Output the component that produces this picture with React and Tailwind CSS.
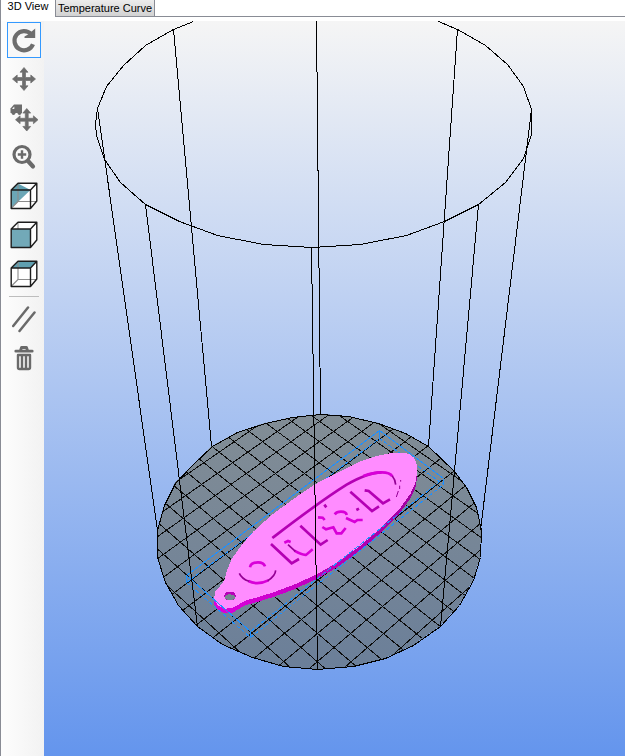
const iconStroke = { fill: "none", stroke: "#6a6a6a", strokeLinecap: "round", strokeLinejoin: "round" };

function Arrows() {
  return (
    <path
      d="M12 0.5 L16 5.2 H13.5 V10.5 H18.8 V8 L23.5 12 L18.8 16 V13.5 H13.5 V18.8 H16 L12 23.5 L8 18.8 H10.5 V13.5 H5.2 V16 L0.5 12 L5.2 8 V10.5 H10.5 V5.2 H8 Z"
      fill="#6d6d6d"
      stroke="#6d6d6d"
      strokeWidth=".7"
      strokeLinejoin="round"
    />
  );
}

function Cube({ children, front }) {
  return (
    <svg width="28" height="28" viewBox="0 0 28 28">
      <path d="M1.5 8 L8 1.5 H26.5 V19 L21 26.5 H1.5 Z" fill="#fff" />
      {children}
      {!front && <path d="M8 1.5 V19.5 H26 M8 19.5 L1.5 26" fill="none" stroke="#8d8d8d" strokeWidth="1.1" />}
      <path
        d="M1.2 8 H20.5 V26.5 H1.2 Z M1.2 8 L8 1.2 H26.8 L20.5 8 M26.8 1.2 V19 L20.5 26.5"
        fill="none"
        stroke="#1c1c1c"
        strokeWidth="1.4"
        strokeLinejoin="round"
      />
    </svg>
  );
}

const tools = [
  {
    name: "Rotate",
    icon: (
      <svg width="28" height="28" viewBox="0 0 28 28">
        <path d="M21 8 A9.6 9.6 0 1 0 23 18.2" fill="none" stroke="#6d6d6d" strokeWidth="4.2" />
        <path d="M25.2 2.5 V12 H14.5 V10.5 L18 8.5 Z" fill="#6d6d6d" />
      </svg>
    ),
  },
  {
    name: "Move",
    icon: (
      <svg width="24" height="26" viewBox="0 -1 24 26">
        <Arrows />
      </svg>
    ),
  },
  {
    name: "Move object",
    icon: (
      <svg width="28" height="30" viewBox="0 0 28 30">
        <path d="M4 1.5 H12 V10 H0.5 V5.5 Z" fill="#6d6d6d" />
        <path d="M2 6 L4.3 3.5 V6 Z" fill="#f5f5f5" />
        <circle cx="3.5" cy="10.3" r="1.8" fill="#6d6d6d" />
        <circle cx="9.5" cy="10.3" r="1.8" fill="#6d6d6d" />
        <g transform="translate(5 5) scale(.98)">
          <Arrows />
        </g>
      </svg>
    ),
  },
  {
    name: "Zoom",
    icon: (
      <svg width="24" height="26" viewBox="0 0 24 26">
        <circle cx="10" cy="10.5" r="8" {...iconStroke} strokeWidth="3.2" />
        <path d="M16.5 17.5 L21 22.5" {...iconStroke} strokeWidth="4.2" />
        <path d="M10 6.3 V14.7 M5.8 10.5 H14.2" {...iconStroke} strokeWidth="2.4" strokeLinecap="butt" />
      </svg>
    ),
  },
  {
    name: "Isometric view",
    icon: (
      <Cube>
        <path d="M1.5 26 V8 H20.5 Z" fill="#6ba6b6" />
        <path d="M1.5 8 L8 1.5 L20.5 8 Z" fill="#5f9fb0" />
      </Cube>
    ),
  },
  {
    name: "Front view",
    icon: (
      <Cube front>
        <path d="M8 8 V1.5" stroke="#8d8d8d" />
        <path d="M1.5 8 H20.5 V26.5 H1.5 Z" fill="#72a9b8" />
      </Cube>
    ),
  },
  {
    name: "Top view",
    icon: (
      <Cube>
        <path d="M1.5 8 L8 1.5 H26.5 L20.5 8 Z" fill="#5f9fb0" />
      </Cube>
    ),
  },
];

const actions = [
  {
    name: "Parallel projection",
    icon: (
      <svg width="24" height="28" viewBox="0 0 24 28">
        <path d="M1.2 21 L16 2.5 M7.5 26 L22.5 7.5" {...iconStroke} strokeWidth="2.5" />
      </svg>
    ),
  },
  {
    name: "Delete",
    icon: (
      <svg width="20" height="26" viewBox="0 0 20 26">
        <path d="M1.8 6.2 H18.2 M6.5 5.5 L7.5 2.5 H12.5 L13.5 5.5" {...iconStroke} strokeWidth="2.8" />
        <path d="M4 10 V22.5 Q4 24 5.5 24 H14.5 Q16 24 16 22.5 V10 Z M8 10 V23.5 M12 10 V23.5" {...iconStroke} strokeWidth="2.4" />
      </svg>
    ),
  },
];

const bedOutline =
  "157,530 164,505 175,483 192,465 212,446 237,432 265,423 292,417 320,414 348,416 378,423 405,433 428,446 454,471 466,487 476,507 481,530 480,557 473,580 459,605 440,626 413,645 385,658 353,666 317,669 283,666 252,657 222,644 197,626 178,605 165,582 157,557";

const rimOutline =
  "193,21 173,29 145,45 123,65 106,86 97,108 95,124 96,135 104,159 120,182 145,204 179,221 217,235 263,244 312,247 360,244 406,235 444,221 478,204 505,182 523,158 531,134 531,109 523,86 507,64 485,45 457,29 438,21";

const struts = [
  [173, 29, 211, 446],
  [145, 204, 197, 626],
  [97, 108, 157, 530],
  [316, 21, 320, 415],
  [311, 247, 317, 669],
  [457, 29, 428, 446],
  [478, 204, 440, 626],
  [531, 109, 480, 530],
];

// Projects a bed grid crossing onto the viewport plane.
function project(i, j) {
  const w = 1 - 0.01028 * i + 0.00942 * j;
  return [(334 + 12.92 * i + 19.44 * j) / w, (619.7 + 7.32 * i - 7.715 * j) / w];
}

function gridLines() {
  const lines = [];
  for (let n = -24; n <= 24; n++) {
    lines.push([...project(n, -14), ...project(n, 24)]);
    lines.push([...project(-24, n), ...project(10, n)]);
  }
  return lines;
}

const body =
  "M74 420 L80 395 L95 357 L125 315 L160 275 L215 225 L280 177 L345 133 L410 99 L480 64 L530 48 L570 40 L600 38 L625 41 L642 53 L651 75 L651 100 L646 130 L632 160 L600 205 L545 262 L480 318 L410 369 L350 403 L280 435 L220 457 L165 474 L135 482 L115 494 L98 504 L75 506 L54 496 L43 479 L44 457 L60 438 Z";

function Model() {
  return (
    <g transform="translate(200 440) scale(.333333)">
      <path d={body} transform="translate(0 14)" fill="url(#side)" />
      <path d={body} fill="#ff8cff" />
      <path d="M73 470 Q73 455 90 455 Q107 455 107 469 Q105 481 90 481 Q75 481 73 470" fill="#b800b8" />
      <ellipse cx="90" cy="472" rx="15" ry="9" fill="#74858f" />
      <g shapeRendering="auto">
        <g fill="none" stroke="#b400b4" strokeWidth="8">
          <path d="M217 294 C290 238 360 184 440 134 C490 105 520 97 545 97" />
          <path d="M213 312 L275 370 L297 357 M301 257 L362 314 L383 300 M451 155 L516 213 L537 199 M494 151 L506 153 L549 190 L570 178" />
          <path d="M373 194 L379 202 M469 210 L477 206" />
        </g>
        <g fill="none" stroke="#d800d8" strokeWidth="8">
          <path d="M490 108 Q520 97 545 97 Q570 97 577 109" />
          <path d="M150 382 Q153 367 174 367 Q191 367 195 379" />
          <path d="M145 423 Q172 437 205 421" />
          <path d="M253 308 L264 303 L272 306 M283 332 Q310 347 319 344 L338 328" />
          <path d="M354 232 L368 233 L374 240 M367 261 L378 268 L400 262 L410 280 L424 280 L437 264 M404 223 Q410 215 423 215 Q439 215 440 225 M438 234 L464 246 L472 240 L488 240" />
        </g>
        <g fill="none" stroke="#930093" strokeWidth="5">
          <path d="M577 108 Q586 119 587 134 M118 400 Q125 416 147 424 M203 422 Q226 408 227 391" />
          <path d="M264 314 L286 334" />
          <path d="M602 120 V125 M599 137 V147 M595 153 L589 171" strokeWidth="3" />
        </g>
      </g>
    </g>
  );
}

function Viewport() {
  return (
    <svg className="block h-auto w-full" viewBox="44 21 581 735" role="img" aria-label="3D view of the print bed">
      <defs>
        <linearGradient id="sky" x1="0" y1="0" x2="0" y2="1">
          <stop offset="0" stopColor="#f5f5f5" />
          <stop offset="1" stopColor="#6495ed" />
        </linearGradient>
        <linearGradient id="bed" x1="0" y1="0" x2="0" y2="1">
          <stop offset="0" stopColor="#828d95" />
          <stop offset="1" stopColor="#6b7f99" />
        </linearGradient>
        <linearGradient id="side" x1="0" y1="0" x2="1" y2="0">
          <stop offset="0" stopColor="#dc00dc" />
          <stop offset=".3" stopColor="#cc00cc" />
          <stop offset=".6" stopColor="#b800b8" />
          <stop offset="1" stopColor="#a000a0" />
        </linearGradient>
        <clipPath id="bedClip">
          <polygon points={bedOutline} />
        </clipPath>
      </defs>
      <rect x="44" y="21" width="581" height="735" fill="url(#sky)" />
      <g shapeRendering="crispEdges">
        <polygon points={bedOutline} fill="url(#bed)" />
        <g clipPath="url(#bedClip)" stroke="#0c0c0c">
          {gridLines().map(([x1, y1, x2, y2], k) => (
            <line key={k} x1={x1} y1={y1} x2={x2} y2={y2} />
          ))}
        </g>
        <g fill="none" stroke="#1e90ff">
          <path d="M186.5 575.5 L379.5 430.5 L443.5 478.5 M379.5 430.5 V439.5" />
          <path d="M186.5 582.5 L379.5 438.5 L443.5 484.5" strokeDasharray="4 2" />
        </g>
        <Model />
        <g fill="none" stroke="#1e90ff">
          <path d="M186.5 582.5 V575.5 L250.5 631.5 V637.5 M443.5 478.5 V484.5" />
          <path d="M250.5 631.5 L443.5 478.5" strokeDasharray="5 2" />
          <path d="M186.5 582.5 L250.5 637.5 L443.5 484.5" strokeDasharray="4 2" />
        </g>
        <g transform="translate(.5 .5)" fill="none" stroke="#000">
          <polygon points={bedOutline} />
          <polyline points={rimOutline} />
          {struts.map(([x1, y1, x2, y2]) => (
            <line key={x1} x1={x1} y1={y1} x2={x2} y2={y2} />
          ))}
        </g>
      </g>
    </svg>
  );
}

function ToolButton({ tool, active }) {
  return (
    <button
      type="button"
      aria-label={tool.name}
      className={`flex h-9 w-[34px] items-center justify-center border ${active ? "border-[#3399ff] bg-[#f8f8f8]" : "border-transparent"}`}
    >
      {tool.icon}
    </button>
  );
}

export default function App() {
  return (
    <div className="min-h-screen overflow-hidden border-l border-[#898c95] bg-white font-['Liberation_Sans',Arial,sans-serif] text-[11px] text-black">
      <div role="tablist" className="flex h-[17px] items-stretch">
        <button type="button" role="tab" aria-selected="true" className="flex w-[54px] items-start justify-center leading-3">
          3D View
        </button>
        <button
          type="button"
          role="tab"
          aria-selected="false"
          className="w-[100px] border-x border-b border-[#898c95] bg-linear-to-b from-[#ececec] to-[#d2d2d2] text-center leading-4 whitespace-nowrap"
        >
          Temperature Curve
        </button>
        <div className="flex-1 border-b border-[#898c95]" />
      </div>
      <div className="flex pt-1">
        <div role="toolbar" aria-label="View tools" className="flex w-[43px] shrink-0 flex-col items-center gap-[3px] bg-linear-to-r from-[#fdfdfd] to-[#f2f2f2] pt-px pl-[2px]">
          {tools.map((tool, k) => (
            <ToolButton key={tool.name} tool={tool} active={k === 0} />
          ))}
          <div className="my-px h-px w-[30px] bg-[#bdbdbd]" />
          {actions.map((tool) => (
            <ToolButton key={tool.name} tool={tool} />
          ))}
        </div>
        <main className="min-w-0 flex-1">
          <Viewport />
        </main>
      </div>
    </div>
  );
}
